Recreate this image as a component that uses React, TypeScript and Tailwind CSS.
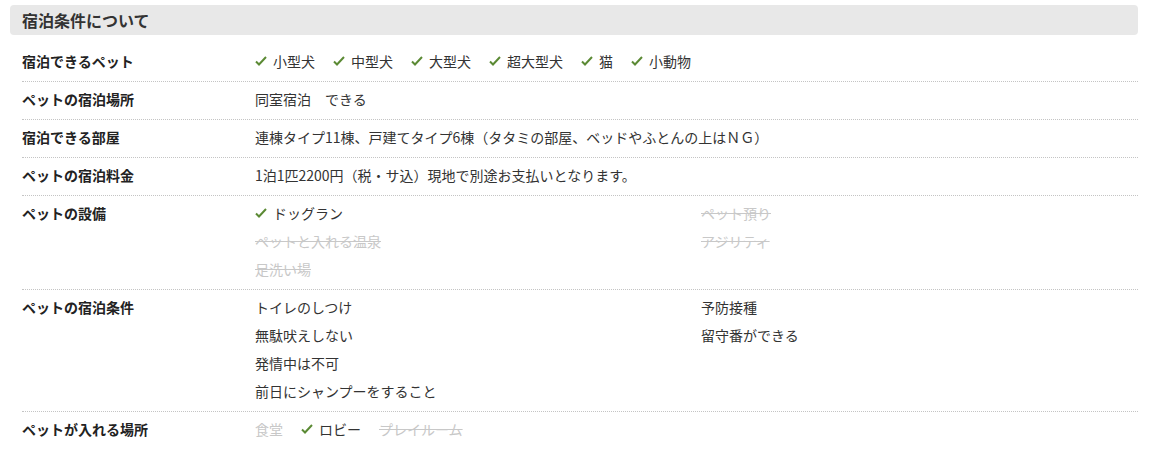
const FONT = "font-['Noto_Sans_CJK_JP','Noto_Sans',sans-serif]";

function Check() {
  return (
    <svg width="12" height="12" viewBox="0 0 12 12" className="shrink-0 text-[#5b8a34]">
      <path d="M1 6.5l3 3L11 2" fill="none" stroke="currentColor" strokeWidth="2" />
    </svg>
  );
}

type Item = { text: string; on: boolean; strike?: boolean };

function Tag({ item }: { item: Item }) {
  if (!item.on) {
    return (
      <span className={`text-[#c8c8c8] ${item.strike === false ? '' : 'line-through'}`}>{item.text}</span>
    );
  }
  return (
    <span className="flex items-center gap-[6px]">
      <Check />
      <span>{item.text}</span>
    </span>
  );
}

function Row({ label, children }: { label: string; children: React.ReactNode }) {
  return (
    <div className="flex pt-[3px] pb-[6px] border-b border-dotted border-[#c4c4c4] last:border-b-0">
      <div className="w-[233px] shrink-0 font-bold text-[#222] leading-[28px]">{label}</div>
      <div className="flex-1 leading-[28px]">{children}</div>
    </div>
  );
}

function Inline({ items }: { items: Item[] }) {
  return (
    <div className="flex items-center gap-[18px]">
      {items.map((it) => (
        <Tag key={it.text} item={it} />
      ))}
    </div>
  );
}

function Col({ items }: { items: Item[] }) {
  return (
    <div className="flex flex-col">
      {items.map((it) => (
        <div key={it.text} className="h-[28px] flex items-center">
          <Tag item={it} />
        </div>
      ))}
    </div>
  );
}

const pets: Item[] = ['小型犬', '中型犬', '大型犬', '超大型犬', '猫', '小動物'].map((t) => ({ text: t, on: true }));

export default function App() {
  return (
    <div className={`${FONT} bg-white w-[1150px] h-[455px] text-[14px] text-[#333] pt-[5px] pl-[10px] pr-[12px]`}>
      <div className="h-[30px] bg-[#e8e8e8] rounded-[4px] pl-[12px] flex items-center text-[16px] font-bold text-[#333]">
        宿泊条件について
      </div>
      <div className="mt-[9px] ml-[12px]">
        <Row label="宿泊できるペット">
          <Inline items={pets} />
        </Row>
        <Row label="ペットの宿泊場所">同室宿泊　できる</Row>
        <Row label="宿泊できる部屋">連棟タイプ11棟、戸建てタイプ6棟（タタミの部屋、ベッドやふとんの上はＮＧ）</Row>
        <Row label="ペットの宿泊料金">1泊1匹2200円（税・サ込）現地で別途お支払いとなります。</Row>
        <Row label="ペットの設備">
          <div className="grid grid-cols-[446px_1fr]">
            <Col
              items={[
                { text: 'ドッグラン', on: true },
                { text: 'ペットと入れる温泉', on: false },
                { text: '足洗い場', on: false },
              ]}
            />
            <Col
              items={[
                { text: 'ペット預り', on: false },
                { text: 'アジリティ', on: false },
              ]}
            />
          </div>
        </Row>
        <Row label="ペットの宿泊条件">
          <div className="grid grid-cols-[446px_1fr]">
            <div className="flex flex-col">
              <span>トイレのしつけ</span>
              <span>無駄吠えしない</span>
              <span>発情中は不可</span>
              <span>前日にシャンプーをすること</span>
            </div>
            <div className="flex flex-col">
              <span>予防接種</span>
              <span>留守番ができる</span>
            </div>
          </div>
        </Row>
        <Row label="ペットが入れる場所">
          <Inline
            items={[
              { text: '食堂', on: false, strike: false },
              { text: 'ロビー', on: true },
              { text: 'プレイルーム', on: false },
            ]}
          />
        </Row>
      </div>
    </div>
  );
}
